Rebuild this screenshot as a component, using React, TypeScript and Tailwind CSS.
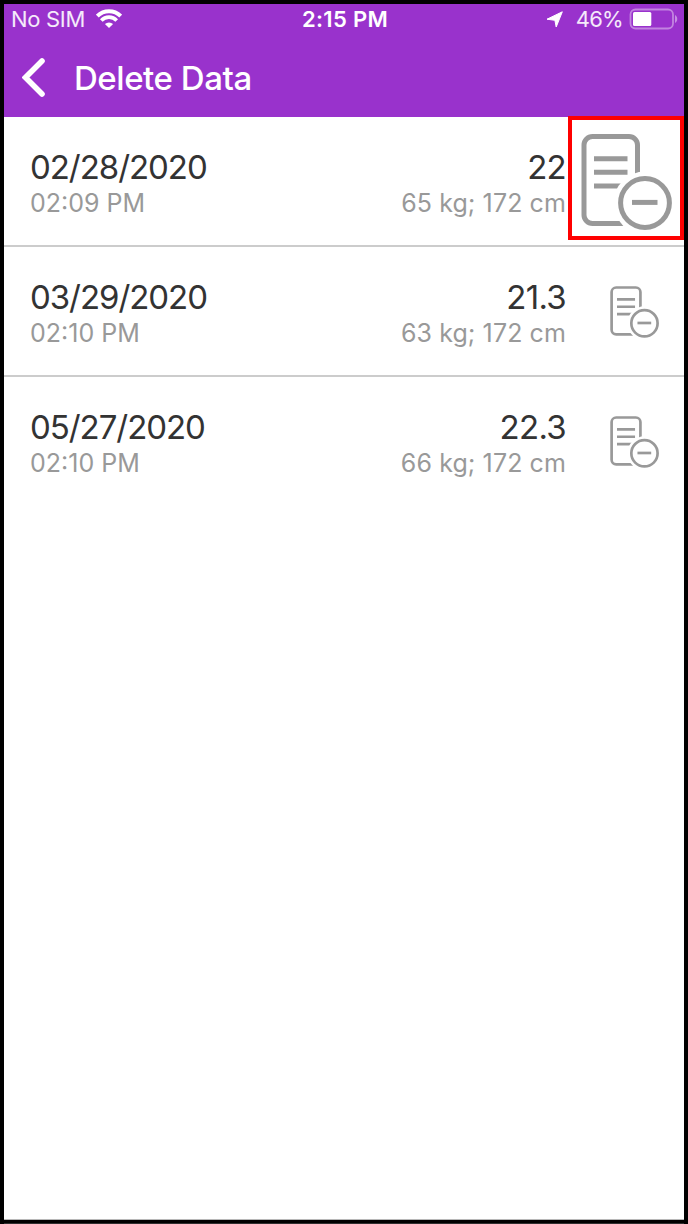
type Entry = {
  date: string;
  time: string;
  bmi: string;
  details: string;
};

const entries: Entry[] = [
  {
    date: "02/28/2020",
    time: "02:09 PM",
    bmi: "22",
    details: "65 kg; 172 cm",
  },
  {
    date: "03/29/2020",
    time: "02:10 PM",
    bmi: "21.3",
    details: "63 kg; 172 cm",
  },
  {
    date: "05/27/2020",
    time: "02:10 PM",
    bmi: "22.3",
    details: "66 kg; 172 cm",
  },
];

function DeleteEntryIcon({ className }: { className: string }) {
  return (
    <svg
      viewBox="0 0 91 96"
      fill="none"
      stroke="#999999"
      strokeWidth="5"
      className={className}
    >
      <rect x="3" y="2.5" width="53.5" height="87" rx="8.5" />
      <path d="M13 24.7h33.500M13 38.300h33.500M13 52h33.500" />
      <circle cx="64" cy="69" r="31.500" fill="#ffffff" stroke="none" />
      <circle cx="64" cy="69" r="24.400" />
      <path d="M51 68.400h25.500" />
    </svg>
  );
}

function StatusBar() {
  return (
    <div className="flex h-[31px] items-center justify-between pr-[5px] pl-[7px] text-[22px] leading-[31px] text-white">
      <div className="flex w-[240px] items-center gap-[11px]">
        <span className="tracking-[-0.3px] text-white/90">No SIM</span>
        <svg viewBox="0 0 26 19" className="mb-0.5 h-[19px] w-[26px]" fill="none">
          <path d="M1.300 7a16.500 16.500 0 0 1 23.400 0" stroke="#fff" strokeWidth="4" />
          <path d="M5.300 11.500a10.500 10.500 0 0 1 15.400 0" stroke="#fff" strokeWidth="3.600" />
          <path d="M8.900 15a6 6 0 0 1 8.200 0L13 19z" fill="#fff" />
        </svg>
      </div>
      <span className="font-semibold tracking-[0.3px]">2:15 PM</span>
      <div className="flex w-[240px] items-center justify-end">
        <svg viewBox="0 0 17 17" className="mr-[13px] h-[17px] w-[17px]">
          <path
            d="M16.300.800 10.200 16 8.900 9.300 1 8.200z"
            fill="#fff"
            stroke="#fff"
            strokeWidth="1"
            strokeLinejoin="round"
          />
        </svg>
        <span className="tracking-[-0.7px] text-white/90">46%</span>
        <svg viewBox="0 0 50 22" className="mb-0.5 ml-[6px] h-[22px] w-[50px]" fill="none">
          <rect x="1.500" y="1.500" width="42.500" height="19" rx="5" stroke="#fff" strokeOpacity=".4" strokeWidth="1.800" />
          <rect x="4" y="4" width="18.300" height="14" rx="1.500" fill="#fff" />
          <path d="M46 7c3 1.500 3 6.500 0 8z" fill="#fff" fillOpacity=".45" />
        </svg>
      </div>
    </div>
  );
}

function EntryRow({ entry, highlighted }: { entry: Entry; highlighted: boolean }) {
  return (
    <li className="relative flex h-[130px] items-start border-b-2 border-[#cccccc] pt-8 pl-[26px] last:border-b-0">
      <div className="flex-1">
        <p className="text-[33px] leading-9 tracking-[-1.05px] text-[#333333]">{entry.date}</p>
        <p className="text-[25px] leading-9 text-[#999999]">{entry.time}</p>
      </div>
      <div className="w-[240px] text-right">
        <p className="text-[33px] leading-9 tracking-[-0.7px] text-[#333333]">{entry.bmi}</p>
        <p className="text-[25px] leading-9 tracking-[0.1px] text-[#999999]">{entry.details}</p>
      </div>
      <div className="w-[118px] pt-[7px] pl-[44px]">
        {!highlighted && <DeleteEntryIcon className="h-[52px] w-[49px]" />}
      </div>
      {highlighted && (
        <div className="absolute -top-px right-0 h-[124px] w-[116px] border-4 border-[#ff0000] bg-white pt-[14px] pl-[9px]">
          <DeleteEntryIcon className="h-[96px] w-[91px]" />
        </div>
      )}
    </li>
  );
}

export default function App() {
  return (
    <div className="h-[1224px] w-[688px] overflow-hidden border-4 border-b-0 border-black bg-white font-['Inter',sans-serif]">
      <div className="flex h-[1220px] flex-col">
        <header className="h-[113px] shrink-0 bg-[#9932cc]">
          <StatusBar />
          <div className="flex h-[84px] items-center pl-[18px]">
            <svg viewBox="0 0 23 39" className="h-[39px] w-[23px]" fill="none">
              <path d="M20 3 3.500 19.500 20 36" stroke="#fff" strokeWidth="5.600" strokeLinecap="round" />
            </svg>
            <h1 className="mt-px ml-[29px] text-[33px] leading-10 font-medium tracking-[-0.45px] text-white">
              Delete Data
            </h1>
          </div>
        </header>
        <ul className="flex-1">
          {entries.map((entry, i) => (
            <EntryRow key={entry.date} entry={entry} highlighted={i === 0} />
          ))}
        </ul>
        <div className="h-[5px] border-t border-b border-t-[#b8b8b8] border-b-[#303030] bg-black" />
      </div>
    </div>
  );
}
